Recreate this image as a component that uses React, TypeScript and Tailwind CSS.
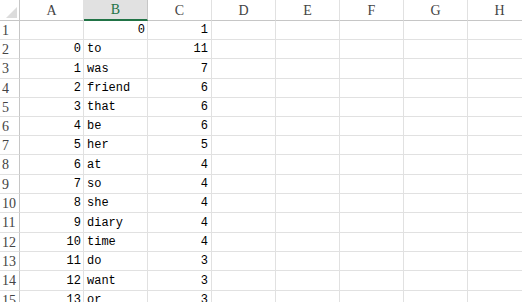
import React from "react";

const cols = ["A", "B", "C", "D", "E", "F", "G", "H"];

const rows: [string, string, string][] = [
  ["", "0", "1"],
  ["0", "to", "11"],
  ["1", "was", "7"],
  ["2", "friend", "6"],
  ["3", "that", "6"],
  ["4", "be", "6"],
  ["5", "her", "5"],
  ["6", "at", "4"],
  ["7", "so", "4"],
  ["8", "she", "4"],
  ["9", "diary", "4"],
  ["10", "time", "4"],
  ["11", "do", "3"],
  ["12", "want", "3"],
  ["13", "or", "3"],
];

const heights = [
  "h-[19px]", "h-[19px]", "h-[20px]", "h-[19px]", "h-[19px]",
  "h-[19px]", "h-[19px]", "h-[20px]", "h-[19px]", "h-[19px]",
  "h-[20px]", "h-[19px]", "h-[19px]", "h-[20px]", "h-[19px]",
];

const App: React.FC = () => {
  return (
    <div className="w-[522px] h-[302px] overflow-hidden bg-white font-['Liberation_Mono',monospace] text-[12px] text-black">
      {/* header */}
      <div className="flex h-[21px] w-[532px]">
        <div className="relative w-[20px] shrink-0 border-r border-b border-[#c6c6c6]">
          <div className="absolute right-[2px] bottom-[2px] w-0 h-0 border-l-[11px] border-l-transparent border-b-[11px] border-b-[#dcdcdc]" />
        </div>
        {cols.map((c) => (
          <div
            key={c}
            className={
              c === "B"
                ? "w-[64px] shrink-0 flex items-center justify-center bg-[#e1e1e1] border-r border-[#c6c6c6] border-b-2 border-b-[#217346] text-[#217346] font-['Liberation_Serif',serif] text-[14px]"
                : "w-[64px] shrink-0 flex items-center justify-center border-r border-r-[#e1e1e1] border-b border-[#c6c6c6] text-[#444] font-['Liberation_Serif',serif] text-[14px]"
            }
          >
            {c}
          </div>
        ))}
      </div>
      {rows.map((r, i) => (
        <div key={i} className={`flex w-[532px] ${heights[i]}`}>
          <div className="w-[20px] shrink-0 flex items-center pl-[2px] border-r border-b border-r-[#c6c6c6] border-b-[#e1e1e1] text-[#444] font-['Liberation_Serif',serif] text-[14px]">
            {i + 1}
          </div>
          <div className="w-[64px] shrink-0 flex items-center justify-end pr-[2px] border-r border-b border-[#e1e1e1]">
            {r[0]}
          </div>
          <div
            className={
              i === 0
                ? "w-[64px] shrink-0 flex items-center justify-end pr-[2px] border-r border-b border-[#e1e1e1]"
                : "w-[64px] shrink-0 flex items-center pl-[3px] border-r border-b border-[#e1e1e1]"
            }
          >
            {r[1]}
          </div>
          <div className="w-[64px] shrink-0 flex items-center justify-end pr-[3px] border-r border-b border-[#e1e1e1]">
            {r[2]}
          </div>
          {cols.slice(3).map((c) => (
            <div key={c} className="w-[64px] shrink-0 border-r border-b border-[#e1e1e1]" />
          ))}
        </div>
      ))}
    </div>
  );
};

export default App;
